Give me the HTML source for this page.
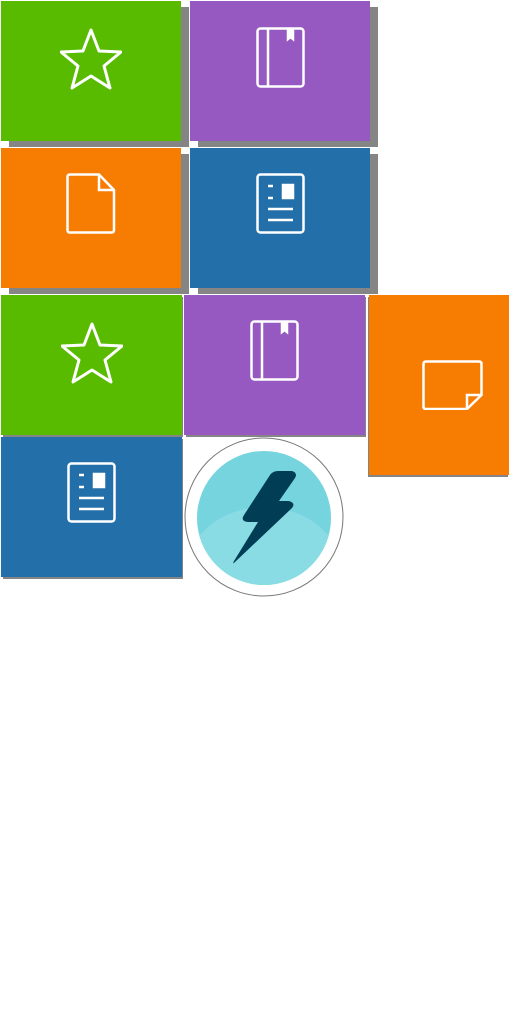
<!DOCTYPE html>
<html><head><style>
body{margin:0;width:512px;height:1024px;background:#fff;position:relative;overflow:hidden}
.t{position:absolute;display:flex;align-items:center;justify-content:center}
.s{position:absolute;background:#858585}
.g{background:#58bb00}.p{background:#9659c1}.o{background:#f77c02}.b{background:#236fa9}
svg{display:block}
</style></head><body>
<div class="s" style="left:9px;top:7px;width:180px;height:140px"></div>
<div class="s" style="left:198px;top:7px;width:180px;height:140px"></div>
<div class="s" style="left:9px;top:154px;width:180px;height:140px"></div>
<div class="s" style="left:198px;top:154px;width:180px;height:140px"></div>
<div class="s" style="left:3px;top:297px;width:180px;height:140px"></div>
<div class="s" style="left:186px;top:297px;width:180px;height:140px"></div>
<div class="s" style="left:368px;top:297px;width:140px;height:180px"></div>
<div class="s" style="left:3px;top:439px;width:180px;height:140px"></div>

<svg style="position:absolute;left:0;top:0" width="0" height="0">
<defs>
<g id="star"><path d="M30 4 L38 25 L60 26 L43 40 L49 62 L30 50 L11 62 L17 40 L0 26 L22 25 Z" fill="none" stroke="#fff" stroke-width="3" stroke-linejoin="round"/></g>
<g id="book" fill="none" stroke="#fff" stroke-width="2.5"><rect x="1.5" y="1.5" width="46" height="58" rx="3"/><line x1="12" y1="2" x2="12" y2="59"/><path d="M32 2 V12 L34.5 10 L37 12 V2" fill="#fff"/></g>
<g id="doc" fill="none" stroke="#fff" stroke-width="2.5"><path d="M4 1.5 H33 L48 17 V57 Q48 59.5 45.5 59.5 H4 Q1.5 59.5 1.5 57 V4 Q1.5 1.5 4 1.5 Z"/><path d="M33 2 V17 H48"/></g>
<g id="news" fill="none" stroke="#fff" stroke-width="2.5"><rect x="1.5" y="1.5" width="46" height="58" rx="3"/><line x1="12" y1="13" x2="17" y2="13"/><line x1="12" y1="25" x2="17" y2="25"/><rect x="27" y="12" width="10" height="13" fill="#fff"/><line x1="12" y1="36" x2="37" y2="36"/><line x1="12" y1="47" x2="37" y2="47"/></g>
</defs></svg>

<div class="t g" style="left:1px;top:1px;width:180px;height:140px;align-items:flex-start"><svg width="62" height="66" viewBox="-1 0 62 66" style="margin-top:25px"><use href="#star"/></svg></div>
<div class="t p" style="left:190px;top:1px;width:180px;height:140px;align-items:flex-start"><svg width="49" height="61" style="margin-top:26px"><use href="#book"/></svg></div>
<div class="t o" style="left:1px;top:148px;width:180px;height:140px;align-items:flex-start"><svg width="50" height="61" style="margin-top:25px"><use href="#doc"/></svg></div>
<div class="t b" style="left:190px;top:148px;width:180px;height:140px;align-items:flex-start"><svg width="49" height="61" style="margin-top:25px"><use href="#news"/></svg></div>

<div class="t g" style="left:1px;top:295px;width:181px;height:140px;align-items:flex-start"><svg width="62" height="66" viewBox="-1 0 62 66" style="margin-top:25px"><use href="#star"/></svg></div>
<div class="t p" style="left:184px;top:295px;width:181px;height:140px;align-items:flex-start"><svg width="49" height="61" style="margin-top:25px"><use href="#book"/></svg></div>
<div class="t o" style="left:369px;top:295px;width:140px;height:180px">
<svg width="62" height="50" style="margin-left:28px;margin-top:0px"><path d="M4 1.5 H57 Q59.5 1.5 59.5 4 V35 L45 49 H4 Q1.5 49 1.5 46.5 V4 Q1.5 1.5 4 1.5 Z M45 49 V35 H59.5" fill="none" stroke="#fff" stroke-width="2.5"/></svg></div>
<div class="t b" style="left:1px;top:437px;width:181px;height:140px;align-items:flex-start"><svg width="49" height="61" style="margin-top:25px"><use href="#news"/></svg></div>

<svg style="position:absolute;left:184px;top:437px" width="160" height="161">
<circle cx="80" cy="80" r="79" fill="#fff" stroke="#777" stroke-width="1"/>
<clipPath id="c"><circle cx="80" cy="81" r="67"/></clipPath>
<circle cx="80" cy="81" r="67" fill="#75d4de"/>
<ellipse cx="80" cy="140" rx="80" ry="70" fill="#8adce4" clip-path="url(#c)"/>
<path d="M94 34 L108 34 Q114 36 111 41 L95 64 L105 64 Q112 66 108 71 L51 125 Q48 128 50 124 L74 85 L64 85 Q56 84 60 78 L86 38 Q89 34 94 34 Z" fill="#023d56"/>
</svg>
</body></html>
